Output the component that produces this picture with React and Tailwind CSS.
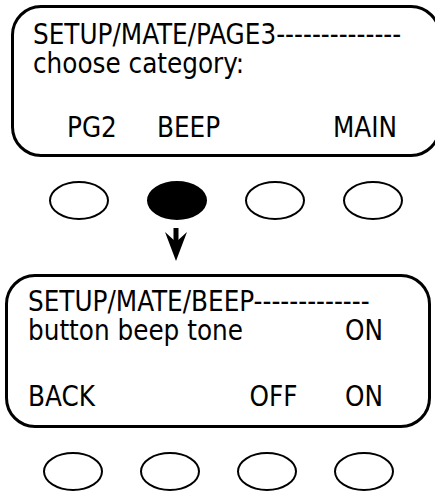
const FONT = "font-['DejaVu_Sans_Condensed','DejaVu_Sans',sans-serif]"

function Oval({ filled }) {
  return (
    <div
      className={`w-[60px] h-[39px] rounded-[50%] border-[2.5px] border-black ${filled ? 'bg-black' : 'bg-white'}`}
    />
  )
}

function Screen({ className, children }) {
  return (
    <div className={`border-[3px] border-black rounded-[30px] bg-white ${className}`}>
      {children}
    </div>
  )
}

export default function App() {
  return (
    <div className={`w-[435px] h-[492px] overflow-hidden bg-white text-black ${FONT} text-[27.5px] leading-[29px]`}>
      {/* Page 3 screen, runs off the right edge */}
      <Screen className="mt-[5px] ml-[11px] w-[430px] shrink-0 pt-[12px] pb-[12px] pl-[19px]">
        <div className="whitespace-nowrap">SETUP/MATE/PAGE3--------------</div>
        <div>choose category:</div>
        <div className="mt-[35px] flex">
          <span className="ml-[34px] w-[90px]">PG2</span>
          <span className="w-[176px]">BEEP</span>
          <span>MAIN</span>
        </div>
      </Screen>

      {/* Buttons, BEEP pressed */}
      <div className="mt-[24px] ml-[49px] flex gap-[38px]">
        <Oval />
        <Oval filled />
        <Oval />
        <Oval />
      </div>

      <svg className="mt-[8px] ml-[165px] block" width="22" height="34" viewBox="0 0 22 34">
        <rect x="8.5" y="0" width="5" height="16" fill="#000" />
        <polygon points="0,4 11,14 22,4 11,33" fill="#000" />
      </svg>

      {/* Beep screen */}
      <Screen className="mt-[12px] ml-[5px] w-[426px] pt-[10px] pb-[14px] pl-[20px] pr-[45px]">
        <div className="whitespace-nowrap">SETUP/MATE/BEEP-------------</div>
        <div className="flex justify-between">
          <span>button beep tone</span>
          <span>ON</span>
        </div>
        <div className="mt-[37px] flex">
          <span className="w-[223px]">BACK</span>
          <span className="w-[96px]">OFF</span>
          <span>ON</span>
        </div>
      </Screen>

      <div className="mt-[24px] ml-[43px] flex gap-[37px]">
        <Oval />
        <Oval />
        <Oval />
        <Oval />
      </div>
    </div>
  )
}
